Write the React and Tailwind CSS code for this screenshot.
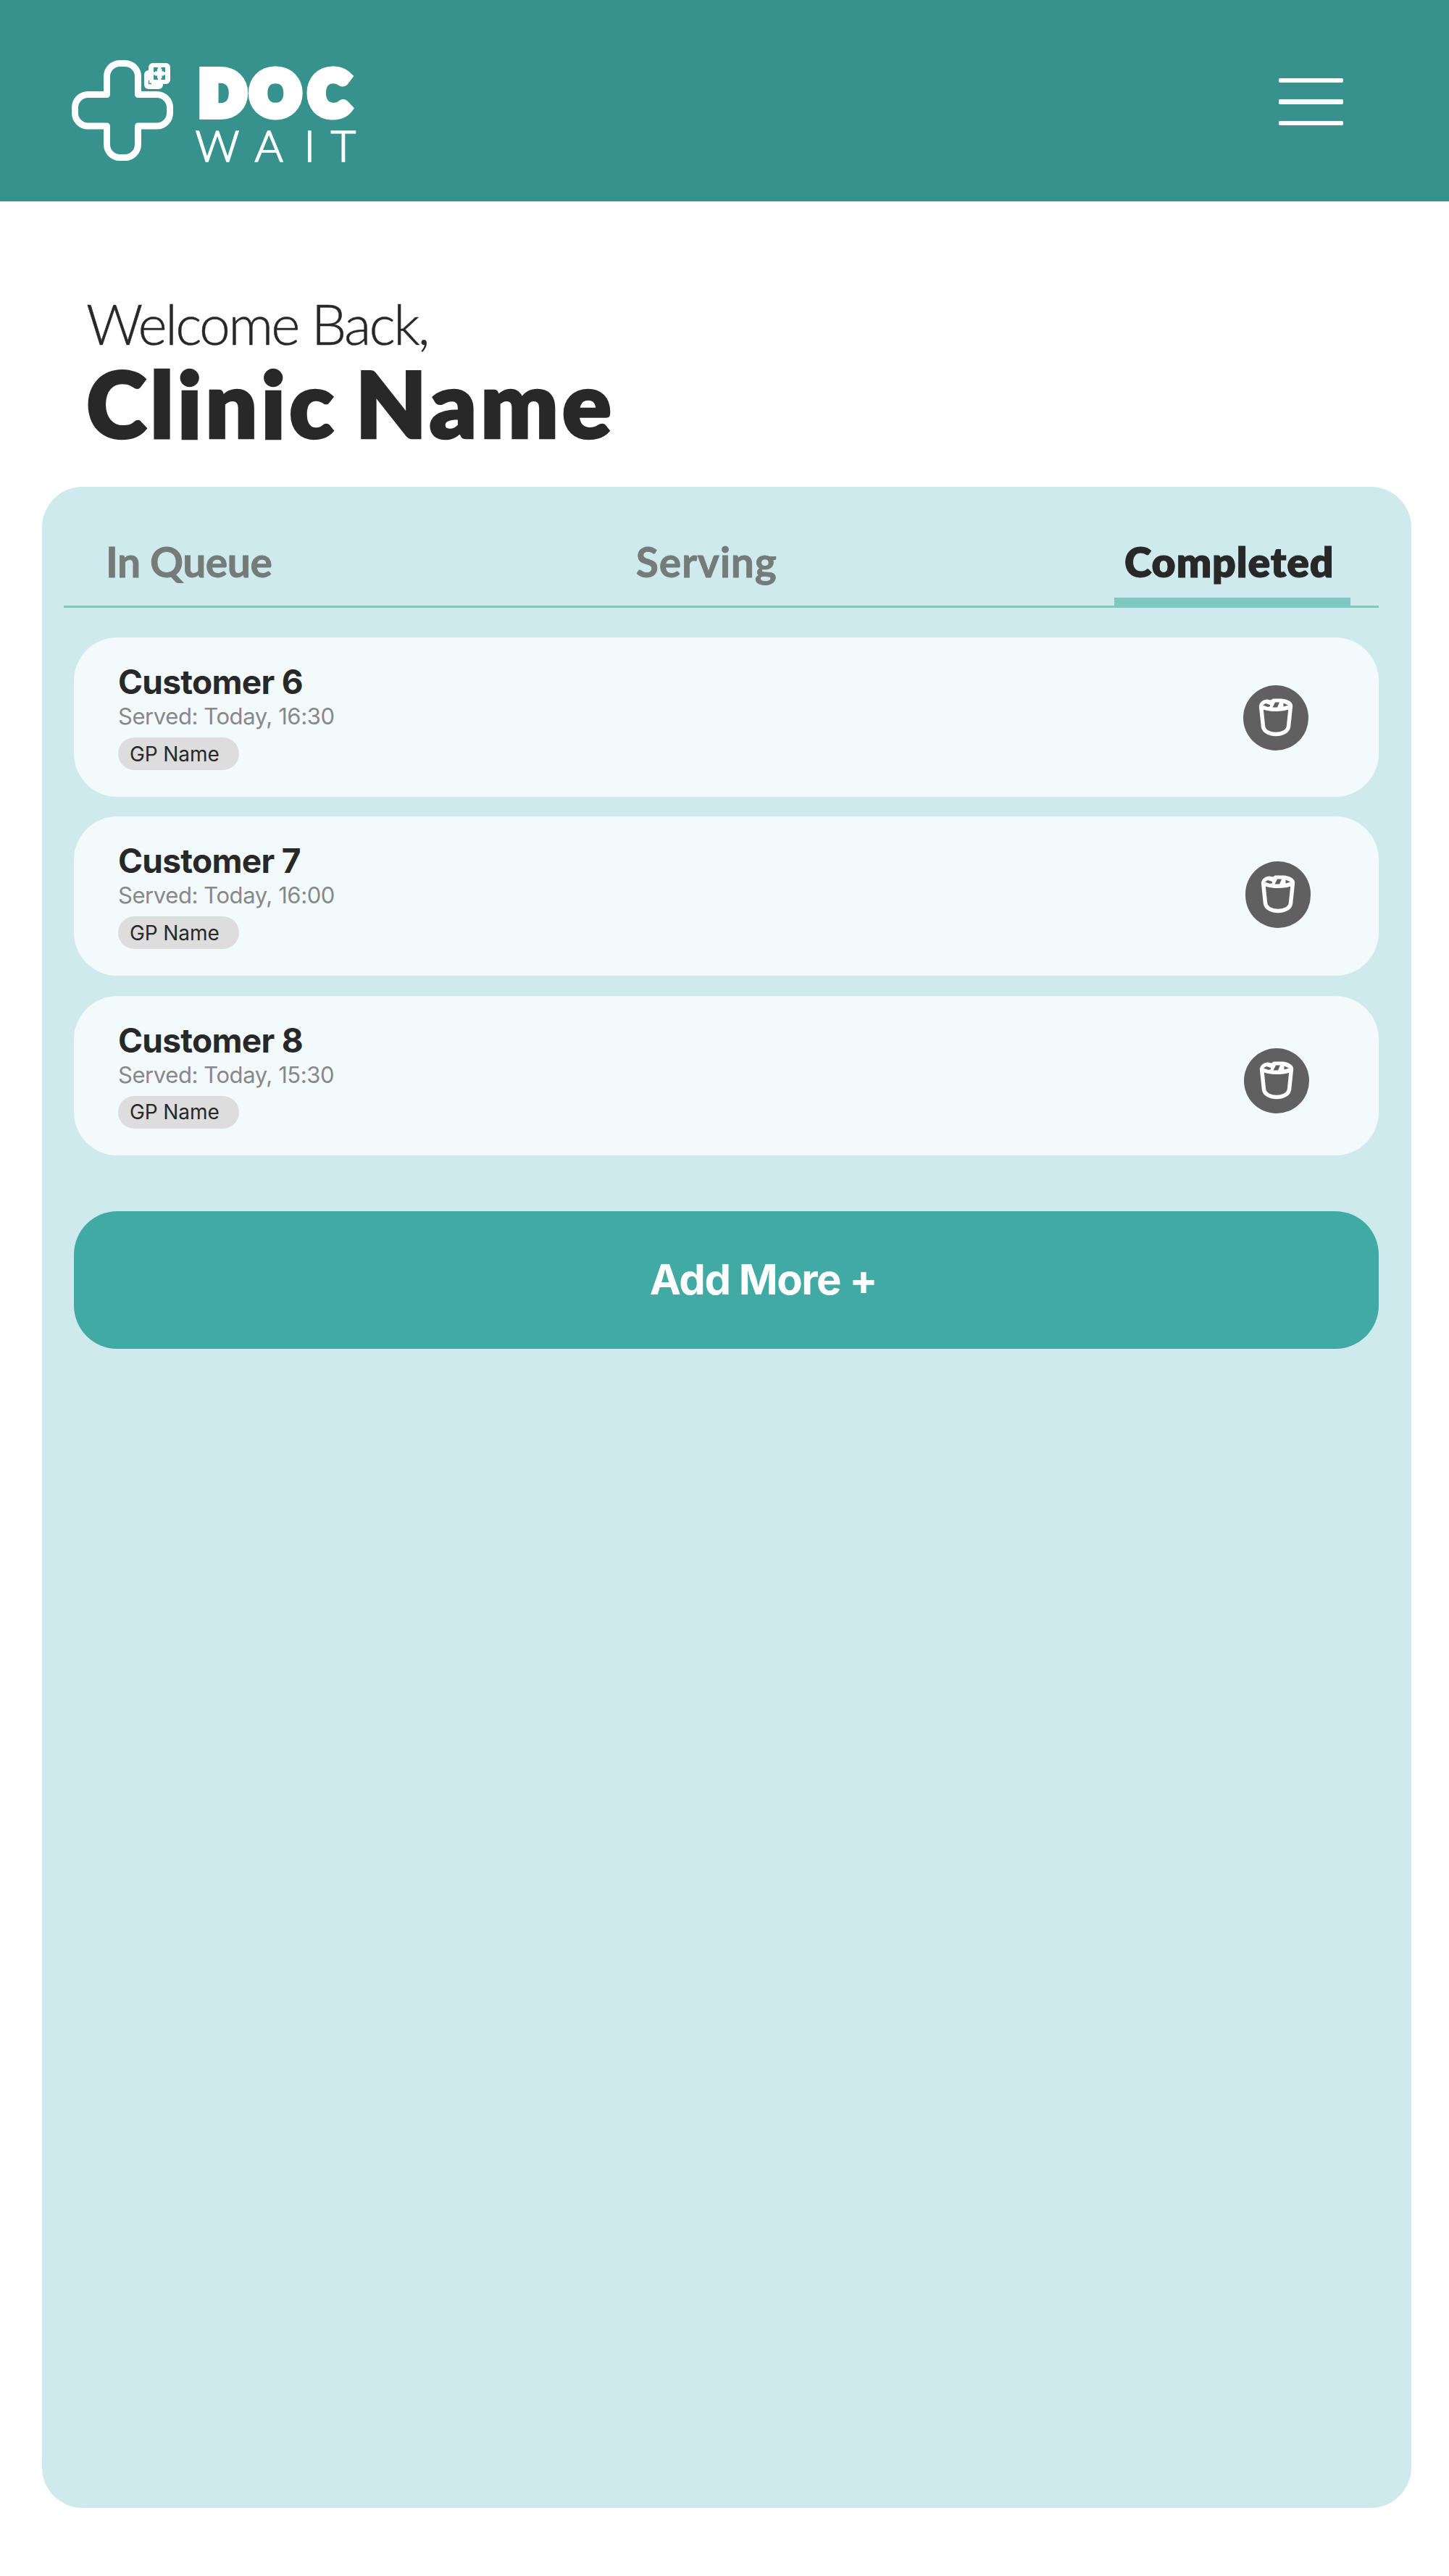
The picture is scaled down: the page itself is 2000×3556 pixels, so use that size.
const customers = [
  { name: "Customer 6", served: "Served: Today, 16:30", gp: "GP Name", icon: "mr-[97px] mt-[66px] h-[90px]" },
  { name: "Customer 7", served: "Served: Today, 16:00", gp: "GP Name", icon: "mr-[94px] mt-[61.600px] h-[92px]" },
  { name: "Customer 8", served: "Served: Today, 15:30", gp: "GP Name", icon: "mr-[96px] mt-[72px] h-[90px]" },
];

function Logo() {
  return (
    <svg className="ml-[90px] mt-[70px] h-[170px] w-[420px]" viewBox="90 70 420 170" role="img" aria-label="Doc Wait">
      <path
        d="M147.5 105.5a18 18 0 0 1 18-18h7a18 18 0 0 1 18 18V130.5H216.500a18 18 0 0 1 18 18v7.500a18 18 0 0 1-18 18H190.500V199.500a18 18 0 0 1-18 18h-7a18 18 0 0 1-18-18V174H121.500a18 18 0 0 1-18-18v-7.500a18 18 0 0 1 18-18H147.500Z"
        fill="none"
        stroke="#fff"
        strokeWidth="9"
        strokeLinejoin="round"
      />
      <rect x="199" y="97" width="26" height="26" rx="6" fill="#fff" />
      <rect x="205" y="87" width="30" height="29" rx="6" fill="#fff" />
      <path
        d="M212 93h6v2h-1v3.500h-3v1h-2ZM228 93h-5.500v2h1v3.500h2.500v1h2ZM212 110h6v-2h-1v-3.500h-3v-1h-2ZM228 110h-5.500v-2h1v-3.500h2.500v-1h2Z"
        fill="#37918c"
      />
      <path d="M205.500 111v4.500h3.500" fill="none" stroke="#37918c" strokeWidth="1.300" />
      <text x="275.500 346.500 427" y="159" fill="#fff" stroke="#fff" strokeWidth="12" className="font-['Lato',sans-serif] text-[83px] font-extrabold">
        DOC
      </text>
      <text x="269.500 351.500 419.500 456.500" y="223" fill="#fff" stroke="#fff" strokeWidth="1.600" className="font-['Lato',sans-serif] text-[60px] font-light">
        WAIT
      </text>
    </svg>
  );
}

function Bin() {
  return (
    <svg className="h-[56px] w-[50px]" viewBox="-25 -28 50 56" fill="none">
      <path d="M-20.500-17 -17.500 12C-16.500 19-8 22.500 0 22.500S16.500 19 17.500 12L20.500-17" stroke="#fff" strokeWidth="5.500" />
      <path d="M-23-17C-22-22-17-25.500-12-25.500L-7-24.500-4-26.500H8C16-26 22-22 23-18V-14C18-10.500 8-9 0-9S-18-10.500-23-14Z" fill="#fff" />
      <path d="M-18-17.500 -14-20 -8-18V-16L-11-15ZM-1-21.500H5L2-14.500H-4.500ZM10.500-20.500 17-17.500 10.500-15.500Z" fill="#606060" />
    </svg>
  );
}

function CustomerCard({ customer }) {
  return (
    <li className="flex h-[220px] items-start justify-between rounded-[60px] bg-[#f2fafc]">
      <div className="flex flex-col items-start pl-[61px] pt-[38px]">
        <h2 className="text-[46px] leading-none font-bold tracking-[-0.700px] text-[#282828]">{customer.name}</h2>
        <p className="mt-[9px] text-[31px] leading-none tracking-[-0.420px] text-[#888888]">{customer.served}</p>
        <span className="mt-[14px] flex h-[45px] w-[167px] items-center rounded-full bg-[#dddddd] pl-[16px] text-[28px] leading-none tracking-[-0.100px] text-[#282828]">
          {customer.gp}
        </span>
      </div>
      <button aria-label="Delete" className={`flex w-[90px] items-center justify-center rounded-full bg-[#606060] ${customer.icon}`}>
        <Bin />
      </button>
    </li>
  );
}

export default function App() {
  return (
    <div className="flex h-[3556px] w-[2000px] flex-col bg-white font-['Inter',sans-serif]">
      <header className="flex h-[278px] shrink-0 items-start justify-between bg-[#37918c]">
        <Logo />
        <button aria-label="Menu" className="mr-[146px] mt-[108px] flex h-[65px] w-[89px] flex-col justify-between">
          <span className="h-[6px] w-full rounded-[2px] bg-white" />
          <span className="h-[7px] w-full rounded-[2px] bg-white" />
          <span className="h-[6px] w-full rounded-[2px] bg-white" />
        </button>
      </header>

      <section className="h-[394px] shrink-0 pl-[119px] pt-[130px] font-['Lato',sans-serif] text-[#282828]">
        <p className="text-[77px] leading-none font-light tracking-[-2.800px] [-webkit-text-stroke:0.5px_#282828]">Welcome Back,</p>
        <h1 className="mt-[8px] text-[127px] leading-none font-extrabold tracking-[4.700px] [word-spacing:-9px] [-webkit-text-stroke:2.5px_#282828]">
          Clinic Name
        </h1>
      </section>

      <main className="ml-[58px] h-[2790px] w-[1890px] shrink-0 rounded-[56px] bg-[#cfeaec] pl-[30px] pr-[45px]">
        <nav className="flex h-[167px] items-end justify-between border-b-[3px] border-[#7ec8c2] pl-[58px] pr-[39px] font-['Lato',sans-serif] text-[57px] leading-none font-bold text-[#747b79]">
          <a className="h-[89px] tracking-[-0.500px] [-webkit-text-stroke:0.8px_#747b79]">In Queue</a>
          <a className="ml-[37px] h-[89px] tracking-[0.700px] [-webkit-text-stroke:0.8px_#747b79]">Serving</a>
          <a className="h-[89px] w-[326px] border-b-[11px] border-[#7ec8c2] pl-[14px] font-extrabold tracking-[0.900px] text-[#282828] [-webkit-text-stroke:1px_#282828]">
            Completed
          </a>
        </nav>
        <ul className="ml-[14px] mt-[41px] flex flex-col gap-[27.400px]">
          {customers.map((c) => (
            <CustomerCard key={c.name} customer={c} />
          ))}
        </ul>
        <button className="ml-[14px] mt-[77.200px] flex h-[190px] w-[1801px] items-center justify-center rounded-[60px] bg-[#42aaa4] pb-px pl-[102px] text-[58px] leading-none font-bold tracking-[-1.500px] text-white">
          Add More +
        </button>
      </main>
    </div>
  );
}
